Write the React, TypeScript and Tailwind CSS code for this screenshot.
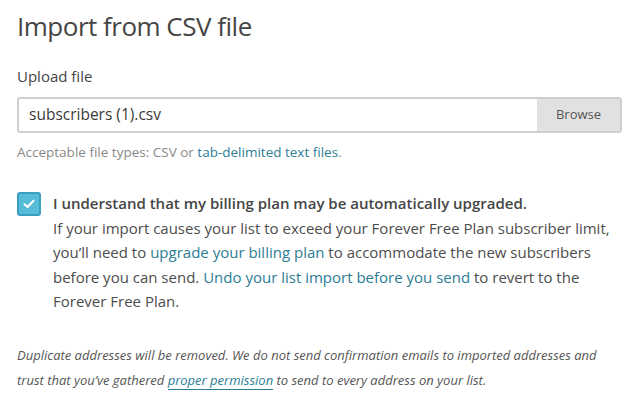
import React from 'react';

export default function App() {
  return (
    <div className="w-[634px] h-[411px] overflow-hidden bg-white px-[17px] text-[#4d4d4d]" style={{ fontFamily: '"Open Sans", sans-serif' }}>
      {/* Heading */}
      <h1 className="pt-[6px] text-[26px] leading-[40px] tracking-[-0.5px] text-[#454545]">Import from CSV file</h1>

      {/* Upload */}
      <label className="mt-[19px] block text-[15px] leading-[22px] text-[#454545]">Upload file</label>
      <div className="mt-[10px] flex h-[36px] w-[605px] rounded-[3px] border-2 border-[#cfcfcf]">
        <div className="flex-1 flex items-center px-[10px] text-[15.5px] text-[#3b3b3b]">subscribers (1).csv</div>
        <div className="w-[83px] flex items-center justify-center bg-[#e1e1e1] text-[13px] text-[#555]">Browse</div>
      </div>
      <p className="mt-[9px] text-[13.5px] leading-[20px] text-[#888]">
        Acceptable file types: CSV or <span className="text-[#2d7d95]">tab-delimited text files</span>.
      </p>

      {/* Billing checkbox */}
      <div className="mt-[29px] flex gap-[12px]">
        <div className="mt-[1px] flex h-[24px] w-[24px] shrink-0 items-center justify-center rounded-[3px] border-2 border-[#3b9fbe] bg-[#56bcd8]">
          <svg width="12" height="10" viewBox="0 0 12 10" fill="none">
            <path d="M1.5 5.2 L4.5 8 L10.5 1.8" stroke="white" strokeWidth="2" strokeLinecap="round" strokeLinejoin="round" />
          </svg>
        </div>
        <div className="text-[15px] leading-[24.5px]">
          <p className="font-semibold text-[#454545]">I understand that my billing plan may be automatically upgraded.</p>
          <p>
            If your import causes your list to exceed your Forever Free Plan subscriber limit, you’ll need to{' '}
            <span className="text-[#2d7d95]">upgrade your billing plan</span> to accommodate the new subscribers before you can send.{' '}
            <span className="text-[#2d7d95]">Undo your list import before you send</span> to revert to the Forever Free Plan.
          </p>
        </div>
      </div>

      {/* Footnote */}
      <p className="mt-[29px] text-[13px] leading-[25px] italic text-[#555]">
        Duplicate addresses will be removed. We do not send confirmation emails to imported addresses and trust that you’ve gathered{' '}
        <span className="text-[#2d7d95] border-b border-[#2d7d95]">proper permission</span> to send to every address on your list.
      </p>
    </div>
  );
}
